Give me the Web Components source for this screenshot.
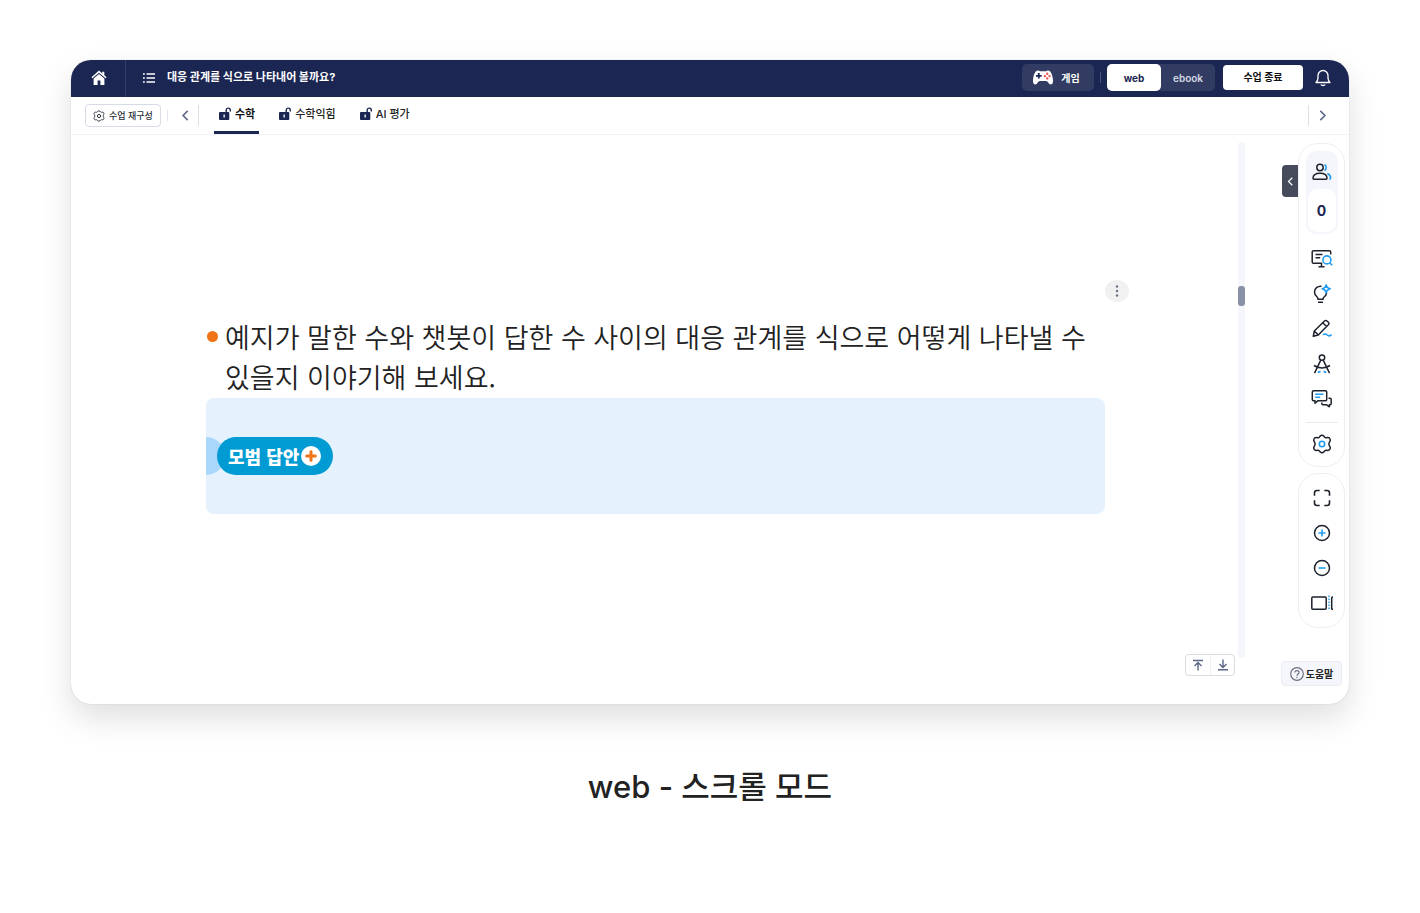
<!DOCTYPE html>
<html lang="ko">
<head>
<meta charset="UTF-8">
<meta name="viewport" content="width=device-width, initial-scale=1.0">
<title>web - 스크롤 모드</title>
<style>
    body {
        margin: 0;
        background: #fff;
        color: #222;
        font-family: Inter, "Noto Sans CJK KR", sans-serif;
    }
</style>
</head>
<body>
<mode-preview>
    <class-viewer></class-viewer>
    <span slot="caption">web - 스크롤 모드</span>
</mode-preview>

<script>
const icons = {
    home: ['0 0 16 16', `<path fill="currentColor" d="M8 .6.4 7.2l1 1.1L8 2.7l6.6 5.6 1-1.1-2.3-2V1.7h-2v1.8z"/><path fill="currentColor" d="M8 4 2.6 8.6V15h4v-4.4h2.8V15h4V8.6z"/>`],
    list: ['0 0 12 12', `<path fill="none" stroke="currentColor" stroke-width="1.3" d="M0 2h1.8M0 6h1.8M0 10h1.8M3.5 2H12M3.5 6H12M3.5 10H12"/>`],
    pad: ['0 0 20 15', `<path fill="#fff" d="M5 .5c1.2 0 1.6.8 2.4.8h5.2c.8 0 1.2-.8 2.4-.8 2.9 0 4.6 4.5 5 9.7.2 2.7-.8 4.3-2.2 4.3-2.1 0-2.7-3.5-4.8-3.5H7c-2.1 0-2.7 3.5-4.8 3.5C.8 14.5-.2 12.9 0 10.2.4 5 2.1.5 5 .5z"/><path stroke="#1b2653" stroke-width="1.8" d="M3 5.8h5.600M5.800 3v5.600"/><g fill="#ef5350"><circle cx="14.200" cy="3.800" r="1.200"/><circle cx="14.200" cy="8.400" r="1.200"/><circle cx="11.900" cy="6.100" r="1.200"/><circle cx="16.500" cy="6.100" r="1.200"/></g>`],
    bell: ['0 0 16 18', `<path fill="none" stroke="currentColor" stroke-width="1.3" stroke-linejoin="round" d="M1 13.500c1.500-1.500 2-2.500 2-4.500V6.500a5 5 0 0 1 10 0V9c0 2 .5 3 2 4.500zM5.800 15.500c.8 1.300 3.600 1.300 4.400 0"/>`],
    left: ['0 0 10 10', `<path fill="none" stroke="currentColor" stroke-width="1.400" d="M7 .8 2.800 5 7 9.200"/>`],
    right: ['0 0 10 10', `<path fill="none" stroke="currentColor" stroke-width="1.400" d="m3 .8 4.200 4.200L3 9.200"/>`],
    lock: ['0 0 12 13', `<path fill="currentColor" fill-rule="evenodd" d="M1 5h8.300a1 1 0 0 1 1 1v6a1 1 0 0 1-1 1H1a1 1 0 0 1-1-1V6a1 1 0 0 1 1-1zm3.500 2.500v3h1.300v-3z"/><path fill="none" stroke="currentColor" stroke-width="1.400" d="M7.200 5.500V3.200a2 2 0 0 1 4.100 0v1.300"/>`],
    gear: ['0 0 20 20', `<path fill="none" stroke="currentColor" stroke-width="1.500" stroke-linejoin="round" d="M8.100 2.100Q10 .3 11.900 2.100L12.800 3.200Q13.500 4 14.600 3.800L15.800 3.600Q17.500 3.500 18.100 5.200 18.600 6.400 17.800 7.500L17.200 8.700Q16.700 10 17.200 11.300L17.800 12.500Q18.600 13.600 18.100 14.800 17.500 16.500 15.800 16.400L14.600 16.200Q13.500 16 12.800 16.800L11.900 17.900Q10 19.700 8.100 17.900L7.200 16.800Q6.500 16 5.400 16.200L4.200 16.400Q2.500 16.500 1.900 14.800 1.400 13.600 2.200 12.500L2.800 11.300Q3.300 10 2.800 8.700L2.200 7.500Q1.400 6.400 1.900 5.200 2.500 3.500 4.200 3.600L5.400 3.800Q6.500 4 7.200 3.200z"/><circle class="accent" cx="10" cy="10" r="2.700" fill="none" stroke-width="1.600"/>`],
    users: ['0 0 20 20', `<g fill="none" stroke="currentColor" stroke-width="1.500"><circle cx="8" cy="5.500" r="3.200"/><path d="M1 16.300c0-3.200 2.500-5 7-5s7 1.800 7 5q0 .9-1 .9H2q-1 0-1-.9z"/></g><path class="accent" fill="none" stroke-width="1.600" d="M12.500 2.500c2.200 1 2.200 5 0 6.100M15.300 11.600q3.200 1.200 3.400 4.400 0 1-1.500 1.200"/>`],
    screen: ['0 0 22 20', `<path fill="none" stroke="currentColor" stroke-width="1.500" stroke-linejoin="round" d="M19.700 5.500V3q0-1.300-1.300-1.300H2.500Q1.200 1.700 1.200 3v10q0 1.300 1.300 1.300h8.800M10.500 14.500v3M7.500 17.700h6M4.500 5.500h7M4.500 8.700h4.700"/><path class="accent" fill="none" stroke-width="1.600" d="m18.600 13.700 2.600 2.600"/><circle class="accent" cx="15.900" cy="10.900" r="4" fill="none" stroke-width="1.600"/>`],
    bulb: ['0 0 20 20', `<path fill="none" stroke="currentColor" stroke-width="1.500" d="M9.500 2.200C5.500 1.800 2.500 4.500 2.500 8c0 2.500 1.300 4 2.600 5 .8.600.9 1.300.9 2.200h5c0-1 .2-1.600 1-2.200 1.500-1.100 2.400-2.500 2.600-4.200M6 18.200h5"/><path class="accent" fill="none" stroke-width="1.500" stroke-linejoin="round" d="M14.200.8q.5 3.300 4 4-3.500.7-4 4-.6-3.300-4-4 3.400-.7 4-4z"/>`],
    pen: ['0 0 20 20', `<path fill="none" stroke="currentColor" stroke-width="1.500" stroke-linejoin="round" d="M1.300 17.200 2.300 12 12.500 2q1.200-1.100 2.500 0l1.300 1.300q1.200 1.200 0 2.500L6.300 16zM10.800 3.700l3.800 3.800M2.300 12l4 4"/><path class="accent" fill="none" stroke-width="1.600" d="M11 16q2-2 4.200 0t4.300-.4"/>`],
    compass: ['0 0 20 20', `<g fill="none" stroke="currentColor" stroke-width="1.500"><circle cx="10" cy="3.600" r="2.700"/><path d="M8.800 6.100 2.500 19.200M11.200 6.100l6.300 13.100M2 11.500q8 5.200 16 0"/></g><path class="accent" fill="none" stroke-width="1.600" d="M5.800 18.600q1.300-1 2.700-1M11.500 17.600q1.400 0 2.700 1"/>`],
    chat: ['0 0 22 20', `<path fill="none" stroke="currentColor" stroke-width="1.500" stroke-linejoin="round" d="M2.500 1.700h12q1.200 0 1.200 1.200v7.600q0 1.200-1.200 1.200H7l-3 2.500v-2.500H2.500q-1.200 0-1.200-1.200V2.900q0-1.200 1.200-1.200zM17.500 9.200H19q1.200 0 1.200 1.200v4.200q0 1.200-1.200 1.200h-.6v2l-2.700-2H12q-1.200 0-1.200-1.200v-1"/><path class="accent" fill="none" stroke-width="1.500" d="M4.200 5.300h8.200M4.200 8.200h5"/>`],
    full: ['0 0 20 20', `<path fill="none" stroke="currentColor" stroke-width="1.600" d="M7.700 2.500H5Q2.500 2.500 2.500 5v2.700M12.300 2.500H15q2.500 0 2.500 2.500v2.700M7.700 17.500H5q-2.500 0-2.500-2.500v-2.700M12.300 17.500H15q2.500 0 2.500-2.500v-2.700"/>`],
    zoomIn: ['0 0 20 20', `<circle cx="10" cy="10" r="7.500" fill="none" stroke="currentColor" stroke-width="1.500"/><path class="accent" stroke-width="1.600" d="M6.500 10h7M10 6.500v7"/>`],
    zoomOut: ['0 0 20 20', `<circle cx="10" cy="10" r="7.500" fill="none" stroke="currentColor" stroke-width="1.500"/><path class="accent" stroke-width="1.600" d="M6.500 10h7"/>`],
    split: ['0 0 22 20', `<rect x=".8" y="4" width="14.400" height="12.300" rx="1" fill="none" stroke="currentColor" stroke-width="1.500"/><path class="accent" fill="none" stroke-width="1.400" stroke-dasharray="1.500 1.500" d="M18 2.500v15"/><path fill="none" stroke="currentColor" stroke-width="1.500" d="M22 4h-.5q-.8 0-.8.8v10.700q0 .8.800.8h.5"/>`],
    top: ['0 0 12 12', `<path fill="none" stroke="currentColor" stroke-width="1.400" d="M1 1.500h10M6 11.500v-7M2.500 7 6 3.600 9.500 7"/>`],
    bottom: ['0 0 12 12', `<path fill="none" stroke="currentColor" stroke-width="1.400" d="M1 10.800h10M6 .5v7.700M2.500 5 6 8.500 9.500 5"/>`],
    help: ['0 0 14 14', `<circle cx="7" cy="7" r="6.300" fill="none" stroke="currentColor" stroke-width="1.200"/><path fill="none" stroke="currentColor" stroke-width="1.200" d="M5 5.500c0-2.700 4.100-2.500 4 0C9 7 7 6.900 7 8.700M7 9.700V11"/>`],
    more: ['0 0 12 12', `<g fill="currentColor"><circle cx="6" cy="1.500" r="1.200"/><circle cx="6" cy="6" r="1.200"/><circle cx="6" cy="10.500" r="1.200"/></g>`],
    plus: ['0 0 20 20', `<circle cx="10" cy="10" r="10" fill="#fff"/><path stroke="#f07318" stroke-width="3" stroke-linecap="round" d="M5.700 10h8.600M10 5.700v8.600"/>`]
};

// shared reset for buttons inside each shadow root
const buttonReset = /*html*/`
    button {
        display: inline-flex;
        align-items: center;
        justify-content: center;
        box-sizing: border-box;
        margin: 0;
        padding: 0;
        border: 0;
        background: none;
        color: inherit;
        font: inherit;
        white-space: nowrap;
        cursor: pointer;
    }
`;

class UiIcon extends HTMLElement {
    connectedCallback() {
        const [box, shape] = icons[this.getAttribute('name')];
        const [, , w, h] = box.split(' ');
        const width = this.getAttribute('width') || w;
        const height = Math.round(width * h / w);
        this.attachShadow({ mode: 'open' }).innerHTML =
            /*html*/`
            <style>
                :host {
                    display: inline-flex;
                    flex: none;
                }
                .accent {
                    stroke: var(--icon-accent, currentColor);
                }
            </style>
            <svg width="${width}" height="${height}" viewBox="${box}" aria-hidden="true">${shape}</svg>
            `
    }
}

class ModePreview extends HTMLElement {
    constructor() {
        super()
        this.attachShadow({ mode: 'open' }).innerHTML =
            /*html*/`
            <style>
                :host {
                    display: flex;
                    flex-direction: column;
                    gap: 59px;
                    padding: 60px 5%;
                }
                .caption {
                    margin: 0;
                    text-align: center;
                    font-size: 31px;
                    line-height: 48px;
                    font-weight: 500;
                }
            </style>
            <slot></slot>
            <p class="caption"><slot name="caption"></slot></p>
            `
    }
}

class ClassViewer extends HTMLElement {
    constructor() {
        super()
        this.attachShadow({ mode: 'open' }).innerHTML =
            /*html*/`
            <style>
                :host {
                    display: block;
                    border-radius: 20px;
                    background: #fff;
                    box-shadow: 0 0 1px rgba(0, 0, 0, .25), 0 14px 32px rgba(0, 0, 0, .13);
                }
                main {
                    display: flex;
                }
                lesson-page {
                    flex: 1;
                    min-width: 0;
                }
            </style>
            <viewer-header></viewer-header>
            <viewer-tabs></viewer-tabs>
            <main>
                <lesson-page>
                    <span slot="question">예지가 말한 수와 챗봇이 답한 수 사이의 대응 관계를 식으로 어떻게 나타낼 수 있을지 이야기해 보세요.</span>
                </lesson-page>
                <scroll-track></scroll-track>
                <tool-side></tool-side>
            </main>
            `
    }
}

class ViewerHeader extends HTMLElement {
    constructor() {
        super()
        this.attachShadow({ mode: 'open' }).innerHTML =
            /*html*/`
            <style>
                ${buttonReset}
                :host {
                    display: block;
                    border-radius: 20px 20px 0 0;
                    background: #1b2653;
                    color: #fff;
                }
                header {
                    display: flex;
                    align-items: center;
                    height: 35px;
                    padding: 0 18px 2px 0;
                }
                .home {
                    width: 54px;
                    height: 100%;
                    padding-left: 2px;
                }
                .divider {
                    align-self: stretch;
                    width: 1px;
                    margin-bottom: -2px;
                    background: #343e66;
                }
                .menu {
                    margin-left: 17px;
                }
                h1 {
                    flex: 1;
                    margin: 0 0 2px 12px;
                    font-size: 11px;
                    line-height: 16px;
                    font-weight: 700;
                }
                .game, .modes {
                    border-radius: 5px;
                    background: #323c63;
                    font-size: 10px;
                    font-weight: 700;
                }
                .game {
                    gap: 8px;
                    width: 72px;
                    height: 27px;
                    padding-right: 3px;
                }
                .line {
                    width: 1px;
                    height: 11px;
                    margin: 0 6px;
                    background: #4d5678;
                }
                .modes {
                    display: flex;
                    margin-right: 8px;
                }
                .modes button {
                    width: 54px;
                    height: 27px;
                    border-radius: 5px;
                    color: #d5d8e2;
                    font-weight: 600;
                }
                .modes .on {
                    background: #fff;
                    color: #1b2653;
                    font-weight: 700;
                }
                .end {
                    width: 80px;
                    height: 25px;
                    padding-bottom: 2px;
                    margin-right: 12px;
                    border-radius: 4px;
                    background: #fff;
                    color: #111;
                    font-size: 10px;
                    font-weight: 700;
                }
            </style>
            <header>
                <button class="home" aria-label="홈"><ui-icon name="home"></ui-icon></button>
                <span class="divider"></span>
                <button class="menu" aria-label="목차"><ui-icon name="list"></ui-icon></button>
                <h1>대응 관계를 식으로 나타내어 볼까요?</h1>
                <button class="game"><ui-icon name="pad"></ui-icon>게임</button>
                <span class="line"></span>
                <div class="modes">
                    <button class="on" aria-pressed="true">web</button>
                    <button aria-pressed="false">ebook</button>
                </div>
                <button class="end">수업 종료</button>
                <button aria-label="알림"><ui-icon name="bell"></ui-icon></button>
            </header>
            `
    }
}

class ViewerTabs extends HTMLElement {
    constructor() {
        super()
        this.attachShadow({ mode: 'open' }).innerHTML =
            /*html*/`
            <style>
                ${buttonReset}
                :host {
                    display: block;
                    border-bottom: 1px solid #f1f2f4;
                }
                nav {
                    display: flex;
                    align-items: center;
                    height: 37px;
                    padding: 0 21px 0 14px;
                    color: #5b6788;
                }
                .edit {
                    gap: 4px;
                    width: 76px;
                    height: 23px;
                    border: 1px solid #d8dce6;
                    border-radius: 4px;
                    color: #2b2f3a;
                    font-size: 9px;
                    font-weight: 500;
                }
                .short {
                    width: 1px;
                    height: 11px;
                    margin: 0 12px 0 6px;
                    background: #e3e5ea;
                }
                .tall {
                    width: 1px;
                    height: 21px;
                    background: #dcdfe6;
                }
                .tall.start {
                    margin: 0 15px 0 7px;
                }
                .tall.end {
                    margin: 0 8px 0 auto;
                }
                .tabs {
                    display: flex;
                    align-self: stretch;
                    gap: 15px;
                }
                .tabs button {
                    gap: 4px;
                    padding: 0 4px 2px 5px;
                    border-bottom: 3px solid transparent;
                    color: #222;
                    font-size: 11px;
                    font-weight: 500;
                }
                .tabs .on {
                    border-color: #1b2653;
                    color: #111;
                    font-weight: 700;
                }
                .tabs ui-icon {
                    color: #1b2653;
                }
            </style>
            <nav>
                <button class="edit"><ui-icon name="gear" width="12"></ui-icon>수업 재구성</button>
                <span class="short"></span>
                <button aria-label="이전"><ui-icon name="left" width="11"></ui-icon></button>
                <span class="tall start"></span>
                <div class="tabs" role="tablist">
                    <button class="on" role="tab" aria-selected="true"><ui-icon name="lock"></ui-icon>수학</button>
                    <button role="tab" aria-selected="false"><ui-icon name="lock"></ui-icon>수학익힘</button>
                    <button role="tab" aria-selected="false"><ui-icon name="lock"></ui-icon>AI 평가</button>
                </div>
                <span class="tall end"></span>
                <button aria-label="다음"><ui-icon name="right" width="11"></ui-icon></button>
            </nav>
            `
    }
}

class LessonPage extends HTMLElement {
    constructor() {
        super()
        this.attachShadow({ mode: 'open' }).innerHTML =
            /*html*/`
            <style>
                ${buttonReset}
                :host {
                    display: flex;
                    flex-direction: column;
                    justify-content: space-between;
                    box-sizing: border-box;
                    padding: 145px 3px 28px 0;
                }
                article {
                    display: flex;
                    flex-direction: column;
                    padding: 0 130px 0 135px;
                }
                .more {
                    align-self: flex-end;
                    width: 24px;
                    height: 22px;
                    margin: 0 -24px 15px 0;
                    border-radius: 50%;
                    background: #f1f1f2;
                    color: #6b7187;
                }
                .question {
                    display: flex;
                    gap: 7px;
                    margin: 0;
                    padding: 0 0 1px 1px;
                    font-family: "Noto Sans CJK KR", sans-serif;
                    font-size: 27px;
                    font-weight: 350;
                    line-height: 40px;
                    word-break: keep-all;
                }
                .question::before {
                    content: "";
                    flex: none;
                    width: 11px;
                    height: 11px;
                    margin-top: 14px;
                    border-radius: 50%;
                    background: #f07318;
                }
                .answer {
                    position: relative;
                    padding: 39px 11px;
                    border-radius: 8px;
                    background: #e5f2fe;
                    overflow: hidden;
                }
                /* half disc peeking out behind the pill */
                .answer::before {
                    content: "";
                    position: absolute;
                    left: -19px;
                    width: 38px;
                    height: 38px;
                    border-radius: 50%;
                    background: #a8d7fb;
                }
                .pill {
                    position: relative;
                    gap: 2px;
                    height: 38px;
                    padding: 0 12px 0 11px;
                    border-radius: 19px;
                    background: #009bd2;
                    color: #fff;
                    font-family: "Noto Sans CJK KR", sans-serif;
                    font-size: 18px;
                    font-weight: 900;
                    vertical-align: top;
                }
                .jump {
                    display: flex;
                    align-self: flex-end;
                    align-items: center;
                    border: 1px solid #d9dce3;
                    border-radius: 4px;
                    color: #5b6788;
                }
                .jump button {
                    width: 24px;
                    height: 20px;
                }
                .jump button + button {
                    border-left: 1px solid #eef0f3;
                }
            </style>
            <article>
                <button class="more" aria-label="더보기"><ui-icon name="more"></ui-icon></button>
                <p class="question"><slot name="question"></slot></p>
                <div class="answer">
                    <button class="pill">모범 답안<ui-icon name="plus"></ui-icon></button>
                </div>
            </article>
            <div class="jump">
                <button aria-label="맨 위로"><ui-icon name="top"></ui-icon></button>
                <button aria-label="맨 아래로"><ui-icon name="bottom"></ui-icon></button>
            </div>
            `
    }
}

class ScrollTrack extends HTMLElement {
    constructor() {
        super()
        this.attachShadow({ mode: 'open' }).innerHTML =
            /*html*/`
            <style>
                :host {
                    display: block;
                    box-sizing: border-box;
                    width: 7px;
                    margin: 7px 0 46px;
                    padding-top: 144px;
                    border-radius: 4px;
                    background: #f4f6fb;
                }
                .thumb {
                    height: 20px;
                    border-radius: 3px;
                    background: #8a90a6;
                }
            </style>
            <div class="thumb"></div>
            `
    }
}

class ToolRail extends HTMLElement {
    constructor() {
        super()
        this.attachShadow({ mode: 'open' }).innerHTML =
            /*html*/`
            <style>
                :host {
                    display: flex;
                    flex-direction: column;
                    align-items: center;
                    box-sizing: border-box;
                    width: 47px;
                    padding: var(--rail-top, 6px) 0 var(--rail-bottom, 7px);
                    border: 1px solid #eeeff2;
                    border-radius: 20px;
                    background: #fff;
                }
            </style>
            <slot></slot>
            `
    }
}

class ToolButton extends HTMLElement {
    connectedCallback() {
        this.attachShadow({ mode: 'open' }).innerHTML =
            /*html*/`
            <style>
                ${buttonReset}
                :host {
                    display: block;
                    color: #1d222d;
                    --icon-accent: #1f9cf0;
                }
                button {
                    width: 32px;
                    height: 35px;
                }
            </style>
            <button aria-label="${this.getAttribute('label')}"><ui-icon name="${this.getAttribute('icon')}" width="${this.getAttribute('size') || 20}"></ui-icon></button>
            `
    }
}

class ToolSide extends HTMLElement {
    constructor() {
        super()
        this.attachShadow({ mode: 'open' }).innerHTML =
            /*html*/`
            <style>
                ${buttonReset}
                :host {
                    display: flex;
                    flex-direction: column;
                    align-items: flex-end;
                    gap: 6px;
                    width: 100px;
                    padding: 8px 4px 18px 0;
                }
                .main {
                    position: relative;
                    --rail-top: 7px;
                    --rail-bottom: 5px;
                }
                .fold {
                    position: absolute;
                    top: 21px;
                    right: 46px;
                    width: 16px;
                    height: 32px;
                    border-radius: 4px 0 0 4px;
                    background: #464b5c;
                    color: #fff;
                }
                .people {
                    box-sizing: border-box;
                    width: 32px;
                    height: 83px;
                    margin-bottom: 7px;
                    padding: 3px 2px 2px;
                    border-radius: 10px;
                    background: #f4f6fb;
                }
                .people tool-button {
                    margin: 0 -2px;
                }
                .count {
                    display: block;
                    border-radius: 9px;
                    background: #fff;
                    color: #1b2653;
                    font-size: 14px;
                    line-height: 43px;
                    font-weight: 700;
                    text-align: center;
                }
                .line {
                    width: 32px;
                    height: 1px;
                    margin: 6px 0 3px;
                    background: #e8eaee;
                }
                .help {
                    gap: 2px;
                    width: 61px;
                    height: 25px;
                    margin: 27px 3px 0 0;
                    border: 1px solid #eceef4;
                    border-radius: 4px;
                    background: #f4f6fb;
                    color: #222;
                    font-size: 10px;
                    font-weight: 700;
                }
                .help ui-icon {
                    color: #6b7080;
                }
            </style>
            <tool-rail class="main">
                <button class="fold" aria-label="접기"><ui-icon name="left" width="9"></ui-icon></button>
                <div class="people">
                    <tool-button icon="users" label="학생"></tool-button>
                    <span class="count">0</span>
                </div>
                <tool-button icon="screen" size="22" label="화면 보기"></tool-button>
                <tool-button icon="bulb" label="아이디어"></tool-button>
                <tool-button icon="pen" label="펜"></tool-button>
                <tool-button icon="compass" label="수학 도구"></tool-button>
                <tool-button icon="chat" size="22" label="대화"></tool-button>
                <span class="line"></span>
                <tool-button icon="gear" label="설정"></tool-button>
            </tool-rail>
            <tool-rail>
                <tool-button icon="full" label="전체 화면"></tool-button>
                <tool-button icon="zoomIn" label="확대"></tool-button>
                <tool-button icon="zoomOut" label="축소"></tool-button>
                <tool-button icon="split" size="22" label="화면 분할"></tool-button>
            </tool-rail>
            <button class="help"><ui-icon name="help"></ui-icon>도움말</button>
            `
    }
}

customElements.define('ui-icon', UiIcon);
customElements.define('tool-button', ToolButton);
customElements.define('tool-rail', ToolRail);
customElements.define('tool-side', ToolSide);
customElements.define('scroll-track', ScrollTrack);
customElements.define('lesson-page', LessonPage);
customElements.define('viewer-tabs', ViewerTabs);
customElements.define('viewer-header', ViewerHeader);
customElements.define('class-viewer', ClassViewer);
customElements.define('mode-preview', ModePreview);
</script>
</body>
</html>
